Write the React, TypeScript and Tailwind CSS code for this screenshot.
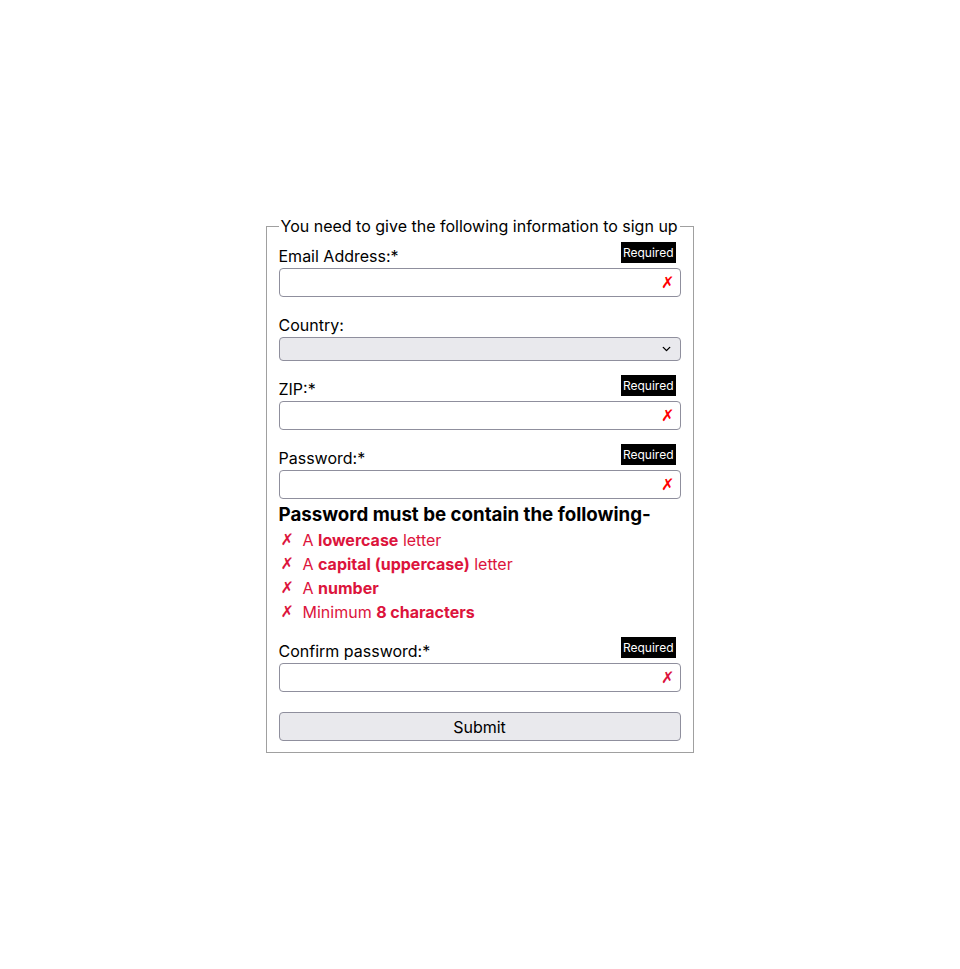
import { ChevronDown } from 'lucide-react';

interface Field {
  id: string;
  label: string;
  type: string;
  crimson?: boolean;
}

function Badge() {
  return (
    <span className="absolute right-[5px] top-[-2px] h-[21px] bg-black px-[2px] text-[12px] leading-[21px] text-white">
      Required
    </span>
  );
}

function RequiredInput({ field }: { field: Field }) {
  return (
    <div className="relative">
      <label htmlFor={field.id} className="block text-[16px] leading-6 text-black">
        {field.label}:*
      </label>
      <Badge />
      <div className="relative">
        <input
          id={field.id}
          type={field.type}
          className="block h-[29px] w-full rounded-[4px] border border-[#8f8f9d] bg-white px-2 text-[16px] outline-none"
        />
        <span
          className={`absolute right-[6px] top-1/2 -translate-y-1/2 text-[16px] leading-none ${
            field.crimson ? 'text-[#dc143c]' : 'text-[#ff0000]'
          }`}
          style={{ fontFamily: '"DejaVu Sans", sans-serif' }}
        >
          ✗
        </span>
      </div>
    </div>
  );
}

const rules = [
  { pre: 'A ', bold: 'lowercase', post: ' letter' },
  { pre: 'A ', bold: 'capital (uppercase)', post: ' letter' },
  { pre: 'A ', bold: 'number', post: '' },
  { pre: 'Minimum ', bold: '8 characters', post: '' },
];

export default function App() {
  return (
    <div
      className="flex min-h-screen items-center justify-center bg-white pb-[2px] pr-[1px] text-black"
      style={{ fontFamily: 'Inter, "Liberation Sans", sans-serif' }}
    >
      <form className="w-[428px]" onSubmit={(e) => e.preventDefault()}>
        <fieldset className="border border-[#a0a0a0] px-[12px] pb-[11px] pt-[6px]">
          <legend className="px-[2px] text-[16px] leading-6">
            You need to give the following information to sign up
          </legend>

          <RequiredInput field={{ id: 'email', label: 'Email Address', type: 'email' }} />

          <div className="mt-4">
            <label htmlFor="country" className="block text-[16px] leading-6">
              Country:
            </label>
            <div className="relative">
              <select
                id="country"
                className="block h-[24px] w-full appearance-none rounded-[4px] border border-[#8f8f9d] bg-[#e9e9ed] px-2 text-[14px]"
              >
                <option value=""></option>
              </select>
              <ChevronDown
                className="pointer-events-none absolute right-[8px] top-1/2 h-[13px] w-[13px] -translate-y-1/2 text-black"
                strokeWidth={2.5}
              />
            </div>
          </div>

          <div className="mt-4">
            <RequiredInput field={{ id: 'zip', label: 'ZIP', type: 'text' }} />
          </div>

          <div className="mt-4">
            <RequiredInput field={{ id: 'password', label: 'Password', type: 'password' }} />
          </div>

          <h3 className="mt-[3px] text-[18.72px] font-bold leading-[26px]">
            Password must be contain the following-
          </h3>
          <ul className="text-[16px] leading-6 text-[#dc143c]">
            {rules.map((r) => (
              <li key={r.bold} className="flex">
                <span
                  className="inline-block w-[24px] pl-[2px]"
                  style={{ fontFamily: '"DejaVu Sans", sans-serif' }}
                >
                  ✗
                </span>
                <span>
                  {r.pre}
                  <b className="font-bold">{r.bold}</b>
                  {r.post}
                </span>
              </li>
            ))}
          </ul>

          <div className="mt-[15px]">
            <RequiredInput
              field={{ id: 'confirm', label: 'Confirm password', type: 'password', crimson: true }}
            />
          </div>

          <button
            type="submit"
            className="mt-5 block h-[29px] w-full rounded-[4px] border border-[#8f8f9d] bg-[#e9e9ed] text-[16px] text-black"
          >
            Submit
          </button>
        </fieldset>
      </form>
    </div>
  );
}
